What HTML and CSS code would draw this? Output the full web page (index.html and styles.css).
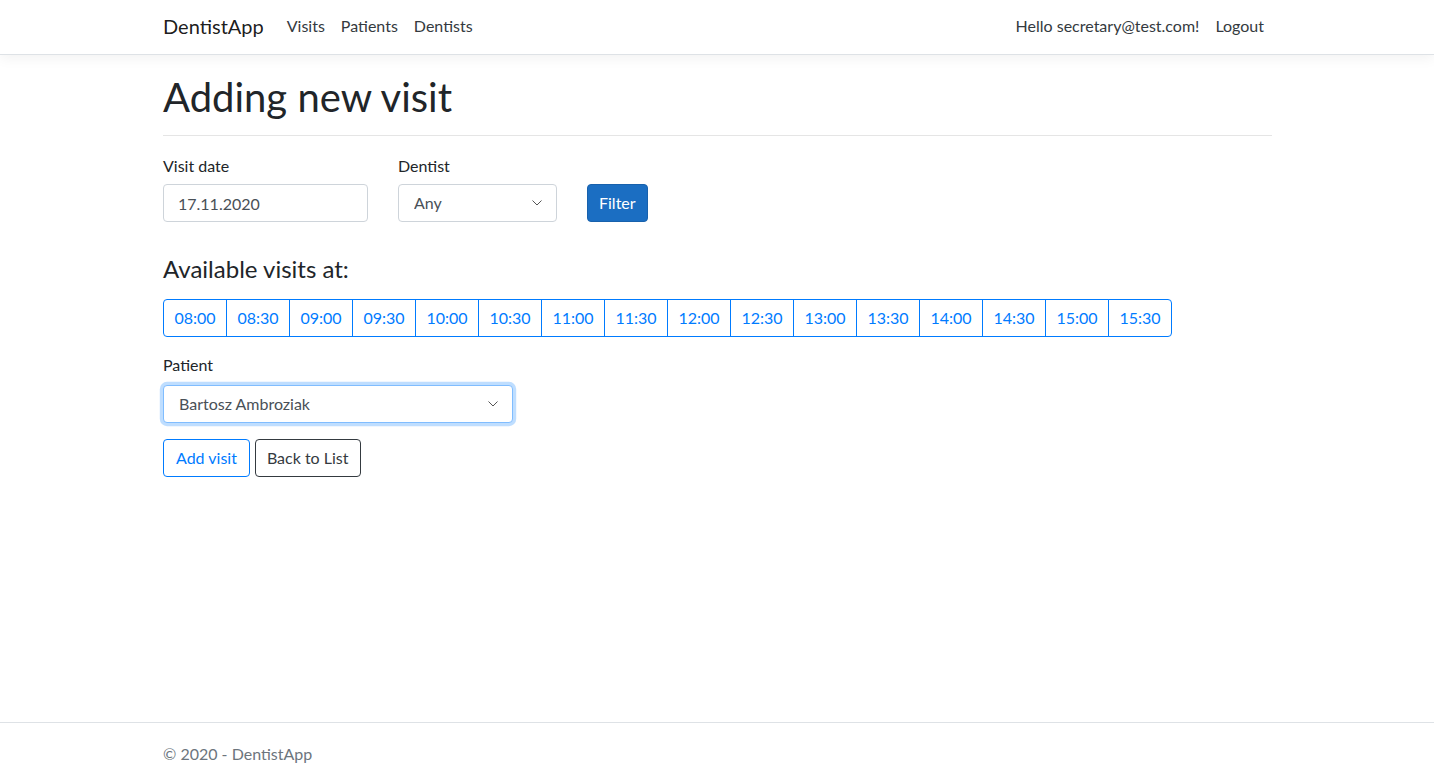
FILE: index.html
```html
<!DOCTYPE html>
<html lang="en">
<head>
<meta charset="utf-8">
<title>Adding new visit - DentistApp</title>
<link rel="stylesheet" href="styles.css">
</head>
<body>
<div class="page">
  <header class="navbar">
    <div class="container nav-inner">
      <a class="brand" href="#">DentistApp</a>
      <ul class="nav">
        <li><a class="nav-link" href="#">Visits</a></li>
        <li><a class="nav-link" href="#">Patients</a></li>
        <li><a class="nav-link" href="#">Dentists</a></li>
      </ul>
      <ul class="nav nav-right">
        <li><span class="nav-link">Hello secretary@test.com!</span></li>
        <li><button class="nav-link link-btn" type="button">Logout</button></li>
      </ul>
    </div>
  </header>

  <main class="container main">
    <h1 class="title">Adding new visit</h1>
    <hr class="rule">

    <form class="filter-row">
      <div class="field field-date">
        <label class="label label-low" for="date">Visit date</label>
        <input id="date" class="control date" type="text" value="17.11.2020">
      </div>
      <div class="field field-dentist">
        <label class="label label-low" for="dentist">Dentist</label>
        <div class="select-wrap">
          <select id="dentist" class="control select"><option>Any</option></select>
          <svg class="chevron" width="10" height="6" viewBox="0 0 10 6"><path d="M0.5 0.5 L5 5 L9.5 0.5" fill="none" stroke="#555" stroke-width="1"/></svg>
        </div>
      </div>
      <div class="field">
        <button class="btn btn-primary" type="button">Filter</button>
      </div>
    </form>

    <h4 class="subtitle">Available visits at:</h4>
    <div class="slots">
      <button class="slot" type="button">08:00</button>
      <button class="slot" type="button">08:30</button>
      <button class="slot" type="button">09:00</button>
      <button class="slot" type="button">09:30</button>
      <button class="slot" type="button">10:00</button>
      <button class="slot" type="button">10:30</button>
      <button class="slot" type="button">11:00</button>
      <button class="slot" type="button">11:30</button>
      <button class="slot" type="button">12:00</button>
      <button class="slot" type="button">12:30</button>
      <button class="slot" type="button">13:00</button>
      <button class="slot" type="button">13:30</button>
      <button class="slot" type="button">14:00</button>
      <button class="slot" type="button">14:30</button>
      <button class="slot" type="button">15:00</button>
      <button class="slot" type="button">15:30</button>
    </div>

    <div class="field field-patient">
      <label class="label" for="patient">Patient</label>
      <div class="select-wrap">
        <select id="patient" class="control select focused"><option>Bartosz Ambroziak</option></select>
        <svg class="chevron" width="10" height="6" viewBox="0 0 10 6"><path d="M0.5 0.5 L5 5 L9.5 0.5" fill="none" stroke="#555" stroke-width="1"/></svg>
      </div>
    </div>

    <div class="actions">
      <button class="btn btn-outline-primary" type="button">Add visit</button>
      <a class="btn btn-outline-dark" href="#">Back to List</a>
    </div>
  </main>

  <footer class="footer">
    <div class="container">© 2020 - DentistApp</div>
  </footer>
</div>
</body>
</html>
```
FILE: styles.css
```css
* { box-sizing: border-box; }
html, body { margin: 0; padding: 0; }
body {
  font-family: Lato, "Open Sans", sans-serif;
  font-size: 16px;
  line-height: 1.5;
  color: #212529;
  background: #fff;
}
.page {
  min-height: 100vh;
  display: flex;
  flex-direction: column;
}
.container {
  width: 1140px;
  margin: 0 auto;
  padding: 0 15px 0 16px;
}

/* navbar */
.navbar {
  background: #fff;
  border-bottom: 1px solid #dee2e6;
  box-shadow: 0 4px 12px rgba(0,0,0,.05);
  margin-bottom: 16px;
}
.nav-inner {
  height: 54px;
  display: flex;
  align-items: center;
  padding-bottom: 2px;
}
.brand {
  font-size: 20px;
  color: rgba(0,0,0,.9);
  text-decoration: none;
  margin-right: 15px;
  line-height: 30px;
}
.nav {
  list-style: none;
  margin: 0;
  padding: 0;
  display: flex;
  align-items: center;
}
.nav-right { margin-left: auto; }
.nav-link {
  display: block;
  padding: 0 8px;
  color: #343a40;
  text-decoration: none;
  font-size: 16px;
  line-height: 24px;
}
.link-btn {
  background: none;
  border: 0;
  font-family: inherit;
  cursor: pointer;
}

/* main */
.main { flex: 1 0 auto; }
.title {
  font-size: 40px;
  font-weight: 400;
  line-height: 1.2;
  margin: 0;
  padding-top: 2px;
}
.rule {
  border: 0;
  border-top: 1px solid rgba(0,0,0,.1);
  margin: 14px 0 16px;
}
.filter-row {
  display: flex;
  align-items: flex-end;
  gap: 30px;
  margin: 0;
}
.field { display: flex; flex-direction: column; }
.field-date { width: 205px; }
.field-dentist { width: 159px; }
.field-patient { width: 350px; margin-top: 16px; }
.label {
  display: block;
  margin-bottom: 8px;
  line-height: 24px;
}
.label-low {
  padding-top: 2px;
  margin-bottom: 6px;
}
.control {
  width: 100%;
  height: 38px;
  padding: 6px 12px;
  font-family: inherit;
  font-size: 16px;
  line-height: 24px;
  color: #495057;
  background: #fff;
  border: 1px solid #ced4da;
  border-radius: 4px;
  outline: none;
}
.date { padding-left: 14px; }
.select-wrap { position: relative; }
.select {
  appearance: none;
  -webkit-appearance: none;
  padding-left: 15px;
  padding-right: 32px;
}
.select.focused {
  border-color: #80bdff;
  box-shadow: 0 0 0 3.2px rgba(0,123,255,.25);
}
.chevron {
  position: absolute;
  right: 15px;
  top: 16px;
  pointer-events: none;
}

.btn {
  display: inline-block;
  height: 38px;
  padding: 6px 12px;
  font-family: inherit;
  font-size: 16px;
  line-height: 24px;
  border: 1px solid transparent;
  border-radius: 4px;
  background: transparent;
  text-decoration: none;
  cursor: pointer;
  vertical-align: middle;
}
.btn-primary {
  color: #fff;
  background: #1b6ec2;
  border-color: #1861ac;
  padding: 6px 11px;
}
.btn-outline-primary {
  color: #007bff;
  border-color: #007bff;
}
.btn-outline-dark {
  color: #343a40;
  border-color: #343a40;
  padding: 6px 11px;
}

.subtitle {
  font-size: 24px;
  font-weight: 400;
  line-height: 1.2;
  margin: 33px 0 15px;
}
.slots {
  display: flex;
}
.slot {
  width: 64px;
  height: 38px;
  padding: 0;
  font-family: inherit;
  font-size: 16px;
  line-height: 24px;
  color: #007bff;
  background: #fff;
  border: 1px solid #007bff;
  border-radius: 0;
  cursor: pointer;
}
.slot + .slot { margin-left: -1px; }
.slot:first-child { border-radius: 4px 0 0 4px; }
.slot:last-child { border-radius: 0 4px 4px 0; }

.actions {
  margin-top: 16px;
  display: flex;
  gap: 5px;
}

/* footer */
.footer {
  border-top: 1px solid #dee2e6;
  height: 56px;
  padding-top: 19px;
  color: #6c757d;
  line-height: 24px;
  white-space: nowrap;
}
```
